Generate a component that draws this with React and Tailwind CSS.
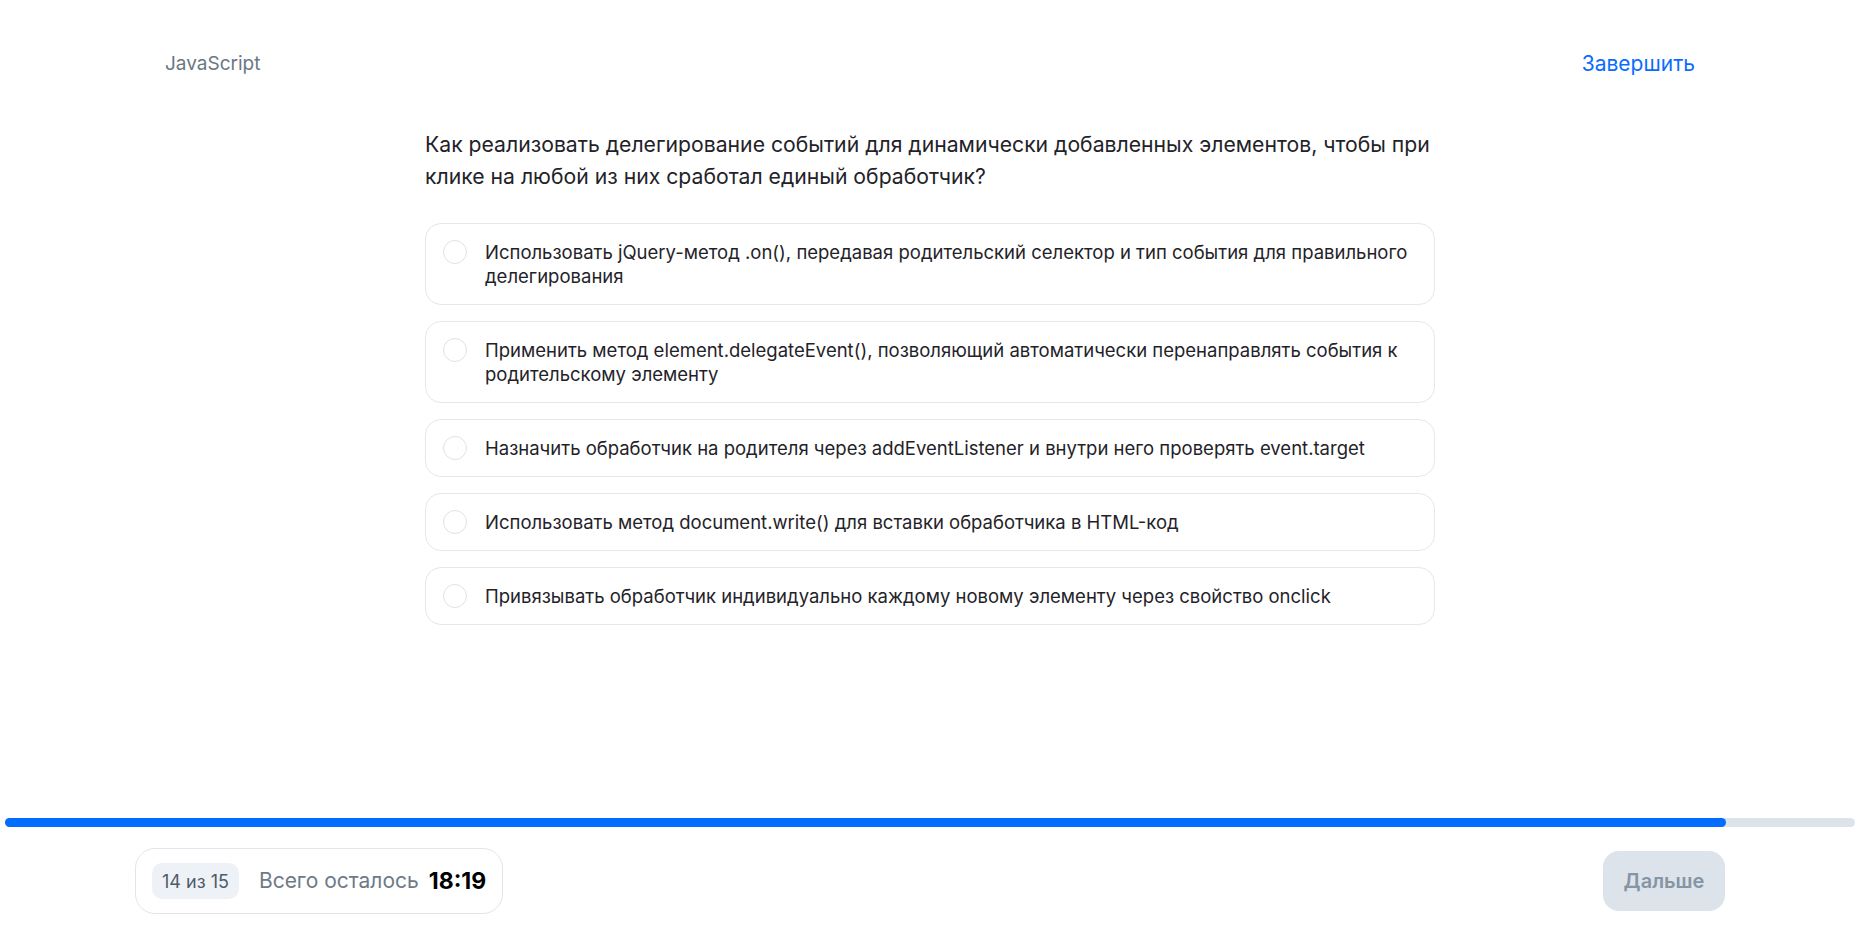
import React from 'react';

const options = [
  'Использовать jQuery-метод .on(), передавая родительский селектор и тип события для правильного делегирования',
  'Применить метод element.delegateEvent(), позволяющий автоматически перенаправлять события к родительскому элементу',
  'Назначить обработчик на родителя через addEventListener и внутри него проверять event.target',
  'Использовать метод document.write() для вставки обработчика в HTML-код',
  'Привязывать обработчик индивидуально каждому новому элементу через свойство onclick',
];

const current = 14;
const total = 15;

const App = () => {
  return (
    <div className="min-h-screen flex flex-col bg-white text-[#1f2329] font-['Inter','Liberation_Sans',Arial,sans-serif]">
      <header className="flex items-center justify-between px-[165px] pt-[52px]">
        <span className="text-[19px] leading-6 text-[#6b7785]">JavaScript</span>
        <button className="text-[21px] leading-6 text-[#0a6cff]">Завершить</button>
      </header>

      <main className="w-full max-w-[1010px] mx-auto">
        <h1 className="mt-[52px] text-[21.2px] leading-[32px] text-[#1f2329]">
          Как реализовать делегирование событий для динамически добавленных элементов, чтобы при
          клике на любой из них сработал единый обработчик?
        </h1>

        <div className="mt-[31px] flex flex-col gap-4">
          {options.map((text, idx) => (
            <label
              key={idx}
              className="flex items-start gap-[18px] rounded-2xl border border-[#e3e8ee] bg-white pl-[17px] pr-6 py-4 cursor-pointer"
            >
              <span className="h-6 w-6 shrink-0 rounded-full border-[1.5px] border-[#dde3ea] bg-white"></span>
              <span className="text-[18.5px] leading-6 text-[#1f2329]">{text}</span>
            </label>
          ))}
        </div>
      </main>

      <footer className="mt-auto">
        <div className="mx-[5px] h-[9px] rounded-full bg-[#dde3ea]">
          <div className="h-full rounded-full bg-[#006dff]" style={{ width: '93%' }}></div>
        </div>
        <div className="flex items-center justify-between px-[135px] pt-[21px] pb-[21px]">
          <div className="flex items-center h-[66px] rounded-[20px] border border-[#e1e6ec] pl-4 pr-4 gap-5">
            <span className="rounded-[10px] bg-[#eef2f7] px-[10px] h-9 flex items-center text-[18px] text-[#4e5a68]">
              {current} из {total}
            </span>
            <div className="flex items-center gap-[10px]">
              <span className="text-[21px] text-[#6e7a88]">Всего осталось</span>
              <span className="text-[23px] font-bold text-black">18:19</span>
            </div>
          </div>
          <button className="h-[60px] w-[122px] rounded-2xl bg-[#dce3eb] text-[20px] font-semibold text-[#8694a3]">
            Дальше
          </button>
        </div>
      </footer>
    </div>
  );
};

export default App;
